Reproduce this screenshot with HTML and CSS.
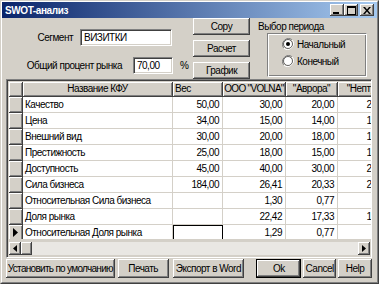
FILE: index.html
```html
<!DOCTYPE html>
<html>
  <head>
    <title>SWOT-анализ</title>
    <link rel="stylesheet" href="styles.css">
  </head>
  <body>
    <div class="window">
      <div class="frame">
        <div class="titlebar">
          <span class="title">SWOT-анализ</span>
          <div class="caption-btns">
            <span class="cap-btn"><svg width="8" height="7" viewBox="0 0 8 7"><rect x="0" y="5" width="6" height="2" fill="#000"/></svg></span>
            <span class="cap-btn"><svg width="9" height="9" viewBox="0 0 9 9"><rect x="0.5" y="0.5" width="8" height="8" fill="none" stroke="#000"/><rect x="0" y="1" width="9" height="1" fill="#000"/></svg></span>
            <span class="cap-btn close"><svg width="8" height="7" viewBox="0 0 8 7"><path d="M0 0h2l2 2.5 2-2.5h2l-3 3.5 3 3.5h-2l-2-2.5-2 2.5h-2l3-3.5z" fill="#000"/></svg></span>
          </div>
        </div>

        <div class="client">
          <div class="top">
            <!-- segment and market share -->
            <div class="fields">
              <div class="row seg">
                <span class="lbl">Сегмент</span>
                <div class="edit">ВИЗИТКИ</div>
              </div>
              <div class="row share">
                <span class="lbl">Общий процент рынка</span>
                <div class="edit">70,00</div>
                <span class="pct">%</span>
              </div>
            </div>

            <div class="actions">
              <button class="btn">Copy</button>
              <button class="btn">Расчет</button>
              <button class="btn">График</button>
            </div>

            <div class="period">
              <div class="period-title">Выбор периода</div>
              <div class="groupbox">
                <div class="radio">
                  <svg width="12" height="12" viewBox="0 0 12 12"><path d="M10.2 1.8A6 6 0 0 0 1.8 10.2" fill="none" stroke="#808080"/><path d="M1.8 10.2A6 6 0 0 0 10.2 1.8" fill="none" stroke="#fff"/><circle cx="6" cy="6" r="4.5" fill="#fff" stroke="#404040" stroke-width="0.8"/><circle cx="6" cy="6" r="2" fill="#000"/></svg>
                  <span>Начальный</span>
                </div>
                <div class="radio">
                  <svg width="12" height="12" viewBox="0 0 12 12"><path d="M10.2 1.8A6 6 0 0 0 1.8 10.2" fill="none" stroke="#808080"/><path d="M1.8 10.2A6 6 0 0 0 10.2 1.8" fill="none" stroke="#fff"/><circle cx="6" cy="6" r="4.5" fill="#fff" stroke="#404040" stroke-width="0.8"/></svg>
                  <span>Конечный</span>
                </div>
              </div>
            </div>
          </div>

          <!-- KFU grid -->
          <div class="grid">
            <div class="cells">
              <div class="fix"></div>
              <div class="fix head center">Название КФУ</div>
              <div class="fix head">Вес</div>
              <div class="fix head center tight">ООО "VOLNA"</div>
              <div class="fix head center">"Аврора"</div>
              <div class="fix head center">"Нептун"</div>

              <div class="fix"></div><div class="cell">Качество</div><div class="cell num">50,00</div><div class="cell num">30,00</div><div class="cell num">20,00</div><div class="cell num">25,00</div>
              <div class="fix"></div><div class="cell">Цена</div><div class="cell num">34,00</div><div class="cell num">15,00</div><div class="cell num">14,00</div><div class="cell num">12,00</div>
              <div class="fix"></div><div class="cell">Внешний вид</div><div class="cell num">30,00</div><div class="cell num">20,00</div><div class="cell num">18,00</div><div class="cell num">16,00</div>
              <div class="fix"></div><div class="cell">Престижность</div><div class="cell num">25,00</div><div class="cell num">18,00</div><div class="cell num">15,00</div><div class="cell num">14,00</div>
              <div class="fix"></div><div class="cell">Доступность</div><div class="cell num">45,00</div><div class="cell num">40,00</div><div class="cell num">30,00</div><div class="cell num">25,00</div>
              <div class="fix"></div><div class="cell">Сила бизнеса</div><div class="cell num">184,00</div><div class="cell num">26,41</div><div class="cell num">20,33</div><div class="cell num">20,67</div>
              <div class="fix"></div><div class="cell">Относительная Сила бизнеса</div><div class="cell num"></div><div class="cell num">1,30</div><div class="cell num">0,77</div><div class="cell num">0,78</div>
              <div class="fix"></div><div class="cell">Доля рынка</div><div class="cell num"></div><div class="cell num">22,42</div><div class="cell num">17,33</div><div class="cell num">19,42</div>
              <div class="fix current"><svg width="5" height="9" viewBox="0 0 5 9"><path d="M0 0l5 4.5-5 4.5z" fill="#000"/></svg></div><div class="cell">Относительная Доля рынка</div><div class="cell num focus"></div><div class="cell num">1,29</div><div class="cell num">0,77</div><div class="cell num">0,88</div>
            </div>

            <div class="hscroll">
              <span class="sb-btn"><svg width="4" height="7" viewBox="0 0 4 7"><path d="M4 0v7L0 3.5z" fill="#000"/></svg></span>
              <span class="sb-btn thumb"></span>
              <span class="sb-track"></span>
              <span class="sb-btn"><svg width="4" height="7" viewBox="0 0 4 7"><path d="M0 0v7l4-3.5z" fill="#000"/></svg></span>
            </div>
          </div>

          <div class="footer">
            <button class="btn w-default">Установить по умолчанию</button>
            <button class="btn w-print">Печать</button>
            <button class="btn w-word">Экспорт в Word</button>
            <button class="btn w-ok default">Ok</button>
            <button class="btn w-cancel">Cancel</button>
            <button class="btn w-help">Help</button>
          </div>
        </div>
      </div>
    </div>
  </body>
</html>
```

FILE: styles.css
```css
* {
  box-sizing: border-box;
}
body {
  margin: 0;
  background-color: #d4d0c8;
  font-family: 'Liberation Sans', Arial, sans-serif;
  font-size: 10px;
  letter-spacing: -0.5px;
  color: #000;
}

/* window chrome */
.window {
  width: 379px;
  height: 284px;
  border: 1px solid;
  border-color: #d4d0c8 #404040 #404040 #d4d0c8;
}
.frame {
  height: 100%;
  border: 1px solid;
  border-color: #fff #808080 #808080 #fff;
  display: flex;
  flex-direction: column;
}
.titlebar {
  height: 16px;
  background: linear-gradient(to right, #0a246a, #a6caf0);
  display: flex;
  align-items: center;
  justify-content: space-between;
  padding: 0 3px 0 3px;
}
.title {
  color: #fff;
  font-weight: bold;
  font-size: 10px;
  letter-spacing: -0.4px;
}
.caption-btns {
  display: flex;
}
.cap-btn {
  width: 14px;
  height: 12px;
  background-color: #d4d0c8;
  box-shadow: inset -1px -1px #404040, inset 1px 1px #fff, inset -2px -2px #808080;
  display: flex;
  align-items: center;
  justify-content: center;
}
.cap-btn.close {
  margin-left: 2px;
}

.client {
  flex: 1;
  display: flex;
  flex-direction: column;
  padding: 0 5px 4px 4px;
}

/* top area */
.top {
  height: 61px;
  display: flex;
}
.fields {
  width: 187px;
}
.row {
  display: flex;
  align-items: center;
}
.row.seg {
  margin-top: 11px;
}
.row.share {
  margin-top: 11px;
}
.seg .lbl {
  width: 67px;
  text-align: right;
  margin-right: 7px;
}
.share .lbl {
  width: 116px;
  text-align: right;
  margin-right: 11px;
}
.edit {
  height: 17px;
  background-color: #fff;
  border: 1px solid;
  border-color: #808080 #fff #fff #808080;
  box-shadow: inset 1px 1px #404040, inset -1px -1px #d4d0c8;
  padding: 1px 3px 0 3px;
  line-height: 14px;
}
.seg .edit {
  width: 92px;
}
.share .edit {
  width: 40px;
}
.pct {
  margin-left: 7px;
}

.actions {
  width: 57px;
  display: flex;
  flex-direction: column;
  gap: 5px;
}
.btn {
  height: 17px;
  padding: 0;
  border: none;
  background-color: #d4d0c8;
  font-family: inherit;
  font-size: 10px;
  letter-spacing: -0.5px;
  white-space: nowrap;
  color: #000;
  box-shadow: inset -1px -1px #404040, inset 1px 1px #fff, inset -2px -2px #808080, inset 2px 2px #d4d0c8;
}

.period {
  margin-left: 8px;
  padding-top: 2px;
}
.period-title {
  height: 13px;
  line-height: 13px;
}
.groupbox {
  margin-left: 9px;
  width: 100px;
  height: 44px;
  border: 1px solid;
  border-color: #808080 #fff #fff #808080;
  box-shadow: inset 1px 1px #fff, inset -1px -1px #808080;
  padding: 4px 0 0 14px;
  display: flex;
  flex-direction: column;
  gap: 5px;
}
.radio {
  display: flex;
  align-items: center;
  gap: 3px;
  height: 12px;
}

/* grid */
.grid {
  width: 366px;
  height: 179px;
  border: 1px solid;
  border-color: #808080 #fff #fff #808080;
  box-shadow: inset 1px 1px #404040, inset -1px -1px #d4d0c8;
  padding: 2px 2px 2px 2px;
  display: flex;
  flex-direction: column;
}
.cells {
  flex: 1;
  background-color: #fff;
  overflow: hidden;
  display: grid;
  grid-template-columns: 14px 150px 50px 63px 52px 55px;
  grid-template-rows: 15px;
  grid-auto-rows: 16px;
  align-content: start;
  width: 362px;
}
.fix {
  background-color: #d4d0c8;
  border-right: 1px solid #404040;
  border-bottom: 1px solid #404040;
  box-shadow: inset 1px 1px #fff, inset -1px -1px #808080;
  padding: 0 2px;
  line-height: 14px;
  white-space: nowrap;
  overflow: hidden;
}
.fix.tight {
  padding: 0;
  letter-spacing: -0.7px;
}
.fix.current {
  display: flex;
  align-items: center;
  padding-left: 4px;
}
.center {
  text-align: center;
}
.cell {
  border-right: 1px solid #d4d0c8;
  border-bottom: 1px solid #d4d0c8;
  padding: 0 2px;
  line-height: 15px;
  white-space: nowrap;
  overflow: hidden;
}
.num {
  text-align: right;
  padding-right: 3px;
}
.cell.focus {
  border: 1px solid #000;
}

.hscroll {
  height: 13px;
  display: flex;
  margin-top: 3px;
  width: 361px;
}
.sb-btn {
  width: 12px;
  height: 13px;
  background-color: #d4d0c8;
  box-shadow: inset -1px -1px #404040, inset 1px 1px #fff, inset -2px -2px #808080;
  display: flex;
  align-items: center;
  justify-content: center;
}
.sb-btn.thumb {
  width: 11px;
}
.sb-track {
  flex: 1;
  background-color: #e9e7e3;
}

/* bottom buttons */
.footer {
  display: flex;
  margin-top: 1px;
}
.footer .btn {
  height: 19px;
}
.w-default { width: 109px; letter-spacing: -0.7px; }
.w-print { width: 51px; margin-left: 3px; }
.w-word { width: 72px; margin-left: 4px; }
.w-ok { width: 45px; margin-left: 12px; }
.w-cancel { width: 33px; margin-left: 2px; }
.w-help { width: 34px; margin-left: 2px; }
.btn.default {
  box-shadow: inset 0 0 0 1px #000, inset -2px -2px #404040, inset 2px 2px #fff, inset -3px -3px #808080;
}
```
